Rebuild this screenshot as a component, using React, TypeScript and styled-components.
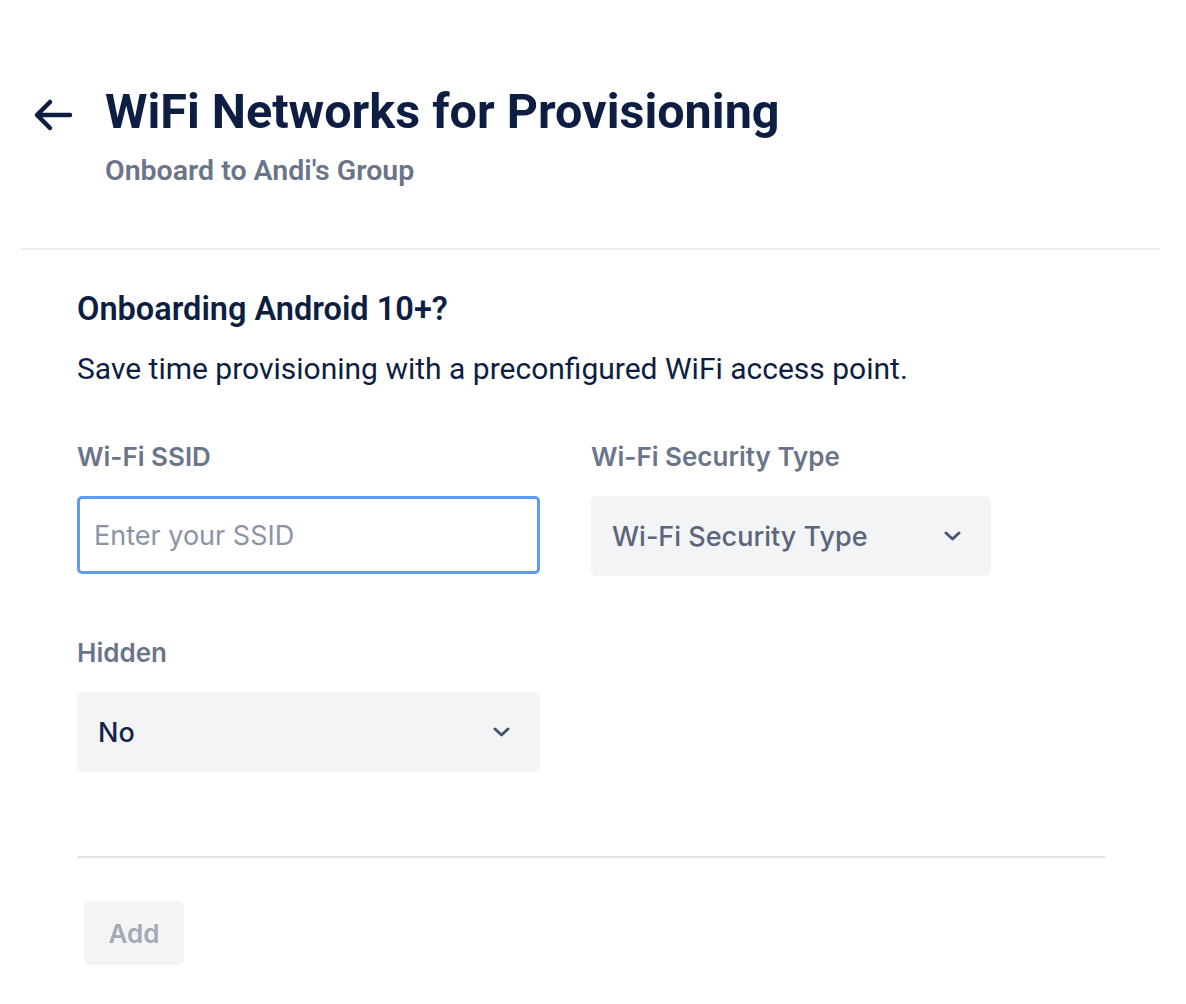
import React from "react";
import styled, { createGlobalStyle } from "styled-components";

const GlobalStyle = createGlobalStyle`
  html, body {
    margin: 0;
    padding: 0;
    background: #ffffff;
  }
  body {
    font-family: "Inter", "Roboto", sans-serif;
    -webkit-font-smoothing: antialiased;
  }
`;

const Page = styled.div`
  width: 1186px;
  min-height: 1004px;
  box-sizing: border-box;
  padding: 0 26px 0 21px;
`;

const Header = styled.header`
  display: flex;
  align-items: flex-start;
  gap: 31px;
  padding: 80px 0 60px 11px;
  border-bottom: 2px solid #ececef;
`;

const BackButton = styled.button`
  display: flex;
  align-items: center;
  justify-content: center;
  width: 42px;
  height: 42px;
  margin-top: 14px;
  padding: 0;
  border: none;
  background: transparent;
  color: #0d1e42;
  cursor: pointer;
`;

const TitleBlock = styled.div`
  display: flex;
  flex-direction: column;
  gap: 10px;
`;

const Title = styled.h1`
  margin: 0;
  font-family: "Roboto", sans-serif;
  font-size: 48.5px;
  line-height: 64px;
  font-weight: 700;
  color: #0d1e42;
`;

const Subtitle = styled.div`
  font-family: "Roboto", sans-serif;
  font-size: 28.5px;
  line-height: 34px;
  font-weight: 600;
  color: #6b7489;
`;

const Content = styled.section`
  padding: 39px 0 0 56px;
`;

const SectionTitle = styled.h2`
  margin: 0;
  font-family: "Roboto", sans-serif;
  font-size: 32.5px;
  line-height: 40px;
  font-weight: 600;
  color: #0d1e42;
`;

const Description = styled.p`
  margin: 20px 0 0;
  font-family: "Roboto", sans-serif;
  font-size: 30px;
  line-height: 40px;
  font-weight: 400;
  color: #0d1e42;
`;

const FieldGrid = styled.div`
  display: grid;
  grid-template-columns: 463px 400px;
  column-gap: 51px;
  row-gap: 60px;
  margin-top: 51px;
`;

const Field = styled.label`
  display: flex;
  flex-direction: column;
  gap: 22px;
`;

const Label = styled.span`
  font-family: "Inter", sans-serif;
  font-size: 26px;
  line-height: 34px;
  font-weight: 600;
  color: #6b7589;
`;

const TextInput = styled.input`
  box-sizing: border-box;
  height: 78px;
  padding: 0 14px;
  border: 3px solid #5e9bf3;
  border-radius: 5px;
  font-family: "Inter", sans-serif;
  font-size: 27px;
  color: #0d1e42;
  outline: none;
  caret-color: #0d1e42;

  &::placeholder {
    color: #8b93a6;
  }
`;

const SelectBox = styled.div<{ $muted?: boolean }>`
  box-sizing: border-box;
  display: flex;
  align-items: center;
  justify-content: space-between;
  height: 80px;
  padding: 0 30px 0 21px;
  border-radius: 6px;
  background: #f3f4f6;
  font-family: "Inter", sans-serif;
  font-size: 27px;
  font-weight: 500;
  color: ${(p) => (p.$muted ? "#5b667c" : "#14234a")};
  cursor: pointer;
`;

const Footer = styled.div`
  margin-top: 84px;
  padding-top: 43px;
  border-top: 2px solid #e3e3e8;
  width: 1028px;
`;

const AddButton = styled.button`
  box-sizing: border-box;
  width: 100px;
  height: 64px;
  margin-left: 7px;
  border: none;
  border-radius: 6px;
  background: #f4f4f5;
  font-family: "Inter", sans-serif;
  font-size: 26px;
  font-weight: 600;
  color: #a4a9b6;
  cursor: not-allowed;
`;

const ArrowLeft = () => (
  <svg width="40" height="34" viewBox="0 0 40 34" fill="none">
    <path
      d="M37 17H4M17 4L4 17l13 13"
      stroke="currentColor"
      strokeWidth="4.5"
      strokeLinecap="round"
      strokeLinejoin="round"
    />
  </svg>
);

const Chevron = () => (
  <svg width="17" height="10" viewBox="0 0 17 10" fill="none">
    <path
      d="M2 2l6.5 6L15 2"
      stroke="#48566f"
      strokeWidth="3"
      strokeLinecap="round"
      strokeLinejoin="round"
    />
  </svg>
);

export default function App() {
  return (
    <>
      <GlobalStyle />
      <Page>
        <Header>
          <BackButton aria-label="Back">
            <ArrowLeft />
          </BackButton>
          <TitleBlock>
            <Title>WiFi Networks for Provisioning</Title>
            <Subtitle>Onboard to Andi's Group</Subtitle>
          </TitleBlock>
        </Header>

        <Content>
          <SectionTitle>Onboarding Android 10+?</SectionTitle>
          <Description>
            Save time provisioning with a preconfigured WiFi access point.
          </Description>

          <FieldGrid>
            <Field>
              <Label>Wi-Fi SSID</Label>
              <TextInput placeholder="Enter your SSID" autoFocus />
            </Field>
            <Field>
              <Label>Wi-Fi Security Type</Label>
              <SelectBox $muted>
                Wi-Fi Security Type
                <Chevron />
              </SelectBox>
            </Field>
            <Field>
              <Label>Hidden</Label>
              <SelectBox>
                No
                <Chevron />
              </SelectBox>
            </Field>
          </FieldGrid>

          <Footer>
            <AddButton disabled>Add</AddButton>
          </Footer>
        </Content>
      </Page>
    </>
  );
}
